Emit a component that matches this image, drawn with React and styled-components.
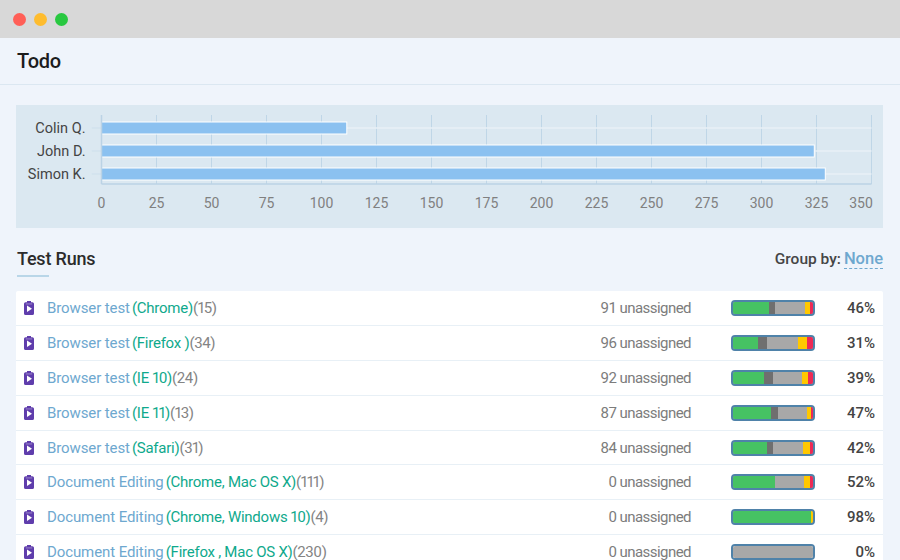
import React from 'react';
import styled, { createGlobalStyle } from 'styled-components';

const GlobalStyle = createGlobalStyle`
  html, body {
    margin: 0;
    padding: 0;
    height: 100%;
    overflow: hidden;
    background: #eff4fb;
  }
  body {
    font-family: Roboto, "Liberation Sans", sans-serif;
  }
`;

const runs = [
  { name: 'Browser test', env: '(Chrome)', count: 15, unassigned: 91, pct: 46, parts: [45, 8, 37, 6.5, 3.5] },
  { name: 'Browser test', env: '(Firefox )', count: 34, unassigned: 96, pct: 31, parts: [31, 12, 38, 12, 7] },
  { name: 'Browser test', env: '(IE 10)', count: 24, unassigned: 92, pct: 39, parts: [39, 10.5, 36.5, 8, 6] },
  { name: 'Browser test', env: '(IE 11)', count: 13, unassigned: 87, pct: 47, parts: [47, 9, 37, 5, 2] },
  { name: 'Browser test', env: '(Safari)', count: 31, unassigned: 84, pct: 42, parts: [42, 8, 38, 8, 4] },
  { name: 'Document Editing', env: '(Chrome, Mac OS X)', count: 111, unassigned: 0, pct: 52, parts: [52, 0, 37, 7.5, 3.5] },
  { name: 'Document Editing', env: '(Chrome, Windows 10)', count: 4, unassigned: 0, pct: 98, parts: [98, 0, 0, 2, 0] },
  { name: 'Document Editing', env: '(Firefox , Mac OS X)', count: 230, unassigned: 0, pct: 0, parts: [0, 0, 100, 0, 0] },
];

const partColors = ['#46c263', '#6f6f6f', '#a8a8a8', '#ffc800', '#ee2a55'];

const people = [
  { name: 'Colin Q.', value: 111.5 },
  { name: 'John D.', value: 324 },
  { name: 'Simon K.', value: 329 },
];

const ticks = [0, 25, 50, 75, 100, 125, 150, 175, 200, 225, 250, 275, 300, 325, 350];

const Window = styled.div`
  width: 900px;
  height: 560px;
  overflow: hidden;
  display: flex;
  flex-direction: column;
  background: #eff4fb;
`;

const TitleBar = styled.div`
  height: 38px;
  flex: none;
  display: flex;
  align-items: center;
  gap: 8px;
  padding-left: 13px;
  background: #d8d8d8;
`;

const Dot = styled.span`
  width: 13px;
  height: 13px;
  border-radius: 50%;
  background: ${(p) => p.$color};
`;

const PageHeader = styled.header`
  height: 47px;
  flex: none;
  box-sizing: border-box;
  display: flex;
  align-items: center;
  padding-left: 17px;
  border-bottom: 1px solid #dbe7f1;
`;

const PageTitle = styled.h1`
  margin: 0;
  font-size: 20px;
  font-weight: 500;
  letter-spacing: -0.2px;
  color: #1c1c1c;
`;

const Content = styled.main`
  display: flex;
  flex-direction: column;
  padding: 20px 17px 0 16px;
`;

const ChartPanel = styled.section`
  height: 123px;
  background: #dbe8f1;
`;

const ChartSvg = styled.svg`
  display: block;
  width: 867px;
  height: 123px;
`;

const NameLabel = styled.text`
  font-size: 14.5px;
  fill: #444;
  text-anchor: end;
`;

const TickLabel = styled.text`
  font-size: 14px;
  fill: #808080;
  text-anchor: middle;
`;

const SectionHeader = styled.div`
  display: flex;
  align-items: flex-start;
  justify-content: space-between;
  height: 63px;
  padding-top: 20px;
  box-sizing: border-box;
`;

const SectionTitle = styled.h2`
  margin: 0 0 0 1px;
  width: fit-content;
  font-size: 18px;
  line-height: 21px;
  font-weight: 500;
  letter-spacing: -0.2px;
  color: #2b2b2b;
`;

const Underline = styled.div`
  width: 32px;
  height: 2px;
  margin: 6px 0 0 1px;
  background: #b9d6e8;
`;

const GroupBy = styled.div`
  font-size: 15.5px;
  line-height: 21px;
  font-weight: 500;
  color: #454545;
`;

const GroupValue = styled.span`
  margin-left: 3px;
  font-size: 16.5px;
  color: #6ea8cf;
  border-bottom: 1px dashed #6ea8cf;
`;

const RunList = styled.div`
  display: flex;
  flex-direction: column;
  border-radius: 2px;
  background: #fff;
`;

const Row = styled.div`
  height: 34.9px;
  flex: none;
  box-sizing: border-box;
  display: grid;
  grid-template-columns: 31px 1fr 160px 40px 84px 68px;
  align-items: center;
  border-bottom: 1px solid #e8f0f6;
  font-size: 15px;
`;

const IconCell = styled.span`
  display: flex;
  padding-left: 8px;
`;

const RunLabel = styled.div`
  white-space: nowrap;
  color: #848484;
  font-variant-numeric: proportional-nums;
`;

const RunName = styled.span`
  letter-spacing: -0.1px;
  color: #6ea8cf;
`;

const RunEnv = styled.span`
  margin-left: 2px;
  letter-spacing: -0.25px;
  color: #0fa98c;
`;

const RunCount = styled.span`
  letter-spacing: -0.4px;
`;

const Unassigned = styled.div`
  text-align: right;
  letter-spacing: -0.55px;
  color: #7c7c7c;
`;

const Progress = styled.div`
  grid-column: 5;
  height: 16px;
  box-sizing: border-box;
  display: flex;
  overflow: hidden;
  border: 2px solid #4f82a9;
  border-radius: 4px;
  background: #a8a8a8;
`;

const Segment = styled.div`
  height: 100%;
  background: ${(p) => p.$color};
`;

const Percent = styled.div`
  padding-right: 8px;
  text-align: right;
  font-weight: 500;
  color: #444;
`;

const RunIcon = () => (
  <svg width="10" height="14" viewBox="0 0 10 14">
    <path fill="#5f3dac" d="M3 0h4v1.2h1.4A1.6 1.6 0 0 1 10 2.8v9.6A1.6 1.6 0 0 1 8.4 14H1.6A1.6 1.6 0 0 1 0 12.4V2.8a1.6 1.6 0 0 1 1.6-1.6H3z" />
    <path fill="#fff" d="M3 4.6v6.4L8 7.8z" />
    <path fill="#fff" d="M1.8 2.6h6.4v.7H1.8z" opacity=".55" />
  </svg>
);

const Chart = () => {
  const x0 = 85.5;
  const scale = 2.2;
  const top = 10;
  const bottom = 79;
  return (
    <ChartSvg viewBox="0 0 867 123">
      {ticks.map((t) => (
        <line key={t} x1={x0 + t * scale} x2={x0 + t * scale} y1={top} y2={bottom} stroke="#bfd6e7" strokeWidth="1" />
      ))}
      {people.map((p, i) => {
        const y = 23 + i * 23;
        return (
          <g key={p.name}>
            <line x1={x0 - 10} x2={x0 + 770} y1={y} y2={y} stroke="#e9f1f6" strokeWidth="1.5" />
            <line x1={x0 - 10} x2={x0} y1={y} y2={y} stroke="#c3d9e8" strokeWidth="1" />
            <NameLabel x={x0 - 16} y={y + 4.5}>{p.name}</NameLabel>
            <rect x={x0} y={y - 6} width={p.value * scale} height={12} fill="#8bc1f0" stroke="#fff" strokeWidth="1" />
          </g>
        );
      })}
      <line x1={x0} x2={x0 + 770} y1={bottom} y2={bottom} stroke="#bbd3e5" strokeWidth="1.5" />
      <line x1={x0} x2={x0} y1={top} y2={bottom} stroke="#bbd3e5" strokeWidth="1.5" />
      {ticks.map((t) => (
        <TickLabel key={t} x={t === 350 ? 845 : x0 + t * scale} y={103}>{t}</TickLabel>
      ))}
    </ChartSvg>
  );
};

const App = () => (
  <>
    <GlobalStyle />
    <Window>
      <TitleBar>
        <Dot $color="#ff5f57" />
        <Dot $color="#febc2e" />
        <Dot $color="#28c840" />
      </TitleBar>
      <PageHeader>
        <PageTitle>Todo</PageTitle>
      </PageHeader>
      <Content>
        <ChartPanel>
          <Chart />
        </ChartPanel>
        <SectionHeader>
          <div>
            <SectionTitle>Test Runs</SectionTitle>
            <Underline />
          </div>
          <GroupBy>
            Group by:<GroupValue>None</GroupValue>
          </GroupBy>
        </SectionHeader>
        <RunList>
          {runs.map((r) => (
            <Row key={r.name + r.env}>
              <IconCell><RunIcon /></IconCell>
              <RunLabel>
                <RunName>{r.name}</RunName>
                <RunEnv>{r.env}</RunEnv>
                <RunCount>({r.count})</RunCount>
              </RunLabel>
              <Unassigned>{r.unassigned} unassigned</Unassigned>
              <Progress>
                {r.parts.map((w, i) => (
                  w > 0 ? <Segment key={i} $color={partColors[i]} style={{ width: `${w}%` }} /> : null
                ))}
              </Progress>
              <Percent>{r.pct}%</Percent>
            </Row>
          ))}
        </RunList>
      </Content>
    </Window>
  </>
);

export default App;
